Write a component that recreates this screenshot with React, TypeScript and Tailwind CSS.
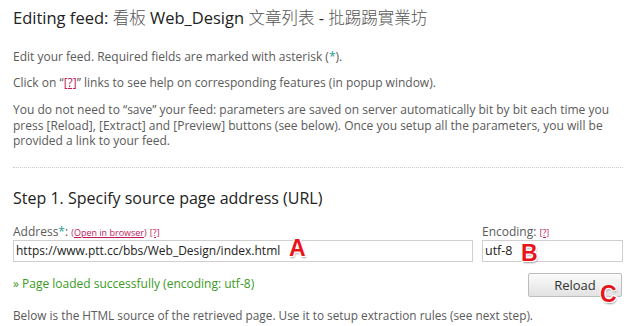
import React from "react";

const letter =
  "absolute font-['Liberation_Sans',Arial,sans-serif] font-bold text-[23px] leading-[23px] text-[#e8141c] [text-shadow:1px_0_0_#fff,-1px_0_0_#fff,0_1px_0_#fff,0_-1px_0_#fff,1px_1px_0_#fff,-1px_-1px_0_#fff,1px_-1px_0_#fff,-1px_1px_0_#fff,1px_2px_2px_#999]";

export default function App() {
  return (
    <div className="w-[640px] h-[326px] overflow-hidden bg-white pl-[13px] pr-[17px] font-['Open_Sans','Noto_Sans_CJK_TC',sans-serif] text-[#5a5a5a]">
      <h1 className="pt-[6px] text-[16.5px] leading-[22px] text-[#222]">
        Editing feed:{" "}
        <span className="font-['Noto_Sans_CJK_TC',sans-serif] font-light text-[#555]">看板</span> Web_Design{" "}
        <span className="font-['Noto_Sans_CJK_TC',sans-serif] font-light text-[#555]">文章列表</span> -{" "}
        <span className="font-['Noto_Sans_CJK_TC',sans-serif] font-light text-[#555]">批踢踢實業坊</span>
      </h1>
      <p className="mt-[20px] text-[12px] leading-[16px]">
        Edit your feed. Required fields are marked with asterisk (<span className="text-[#1e9c8c]">*</span>).
      </p>
      <p className="mt-[10px] text-[12px] leading-[16px]">
        Click on “<span className="text-[#c2185b] underline">[?]</span>” links to see help on corresponding features (in popup window).
      </p>
      <p className="mt-[11px] text-[12px] leading-[15.5px]">
        You do not need to “save” your feed: parameters are saved on server automatically bit by bit each time you press [Reload], [Extract] and [Preview] buttons (see below). Once you setup all the parameters, you will be provided a link to your feed.
      </p>
      <div className="mt-[18px] border-t border-dotted border-[#c8c8c8]" />
      <h2 className="mt-[19px] text-[16px] leading-[22px] text-[#222]">Step 1. Specify source page address (URL)</h2>
      <div className="mt-[16px] flex gap-[9px]">
        <div className="flex-1">
          <div className="text-[12px] leading-[14px]">
            Address<span className="text-[#1e9c8c]">*</span>:{" "}
            <span className="text-[9px] text-[#c2185b]">
              (<span className="underline">Open in browser</span>)
            </span>{" "}
            <span className="text-[9px] text-[#c2185b] underline">[?]</span>
          </div>
          <div className="relative h-[22px] border border-[#cfcfcf] px-[2px] text-[12px] leading-[20px] text-[#222]">
            https://www.ptt.cc/bbs/Web_Design/index.html
            <span className={`${letter} left-[275px] top-[-4px]`}>A</span>
          </div>
        </div>
        <div className="w-[141px]">
          <div className="text-[12px] leading-[14px]">
            Encoding: <span className="text-[9px] text-[#c2185b] underline">[?]</span>
          </div>
          <div className="relative h-[22px] border border-[#cfcfcf] px-[2px] text-[12.5px] leading-[20px] text-[#222]">
            utf-8
            <span className={`${letter} left-[38px] top-[1px]`}>B</span>
          </div>
        </div>
      </div>
      <div className="mt-[10px] flex items-center justify-between">
        <span className="text-[12px] leading-[16px] text-[#3a9a24]">» Page loaded successfully (encoding: utf-8)</span>
        <div className="relative mr-[1px]">
          <button className="h-[24px] w-[94px] rounded-[2px] border border-[#bdbdbd] bg-gradient-to-b from-[#fbfbfb] to-[#e2e2e2] text-[13px] leading-[22px] text-[#333]">
            Reload
          </button>
          <span className={`${letter} left-[72px] top-[11px]`}>C</span>
        </div>
      </div>
      <p className="mt-[10px] text-[11.8px] leading-[16px]">
        Below is the HTML source of the retrieved page. Use it to setup extraction rules (see next step).
      </p>
    </div>
  );
}
